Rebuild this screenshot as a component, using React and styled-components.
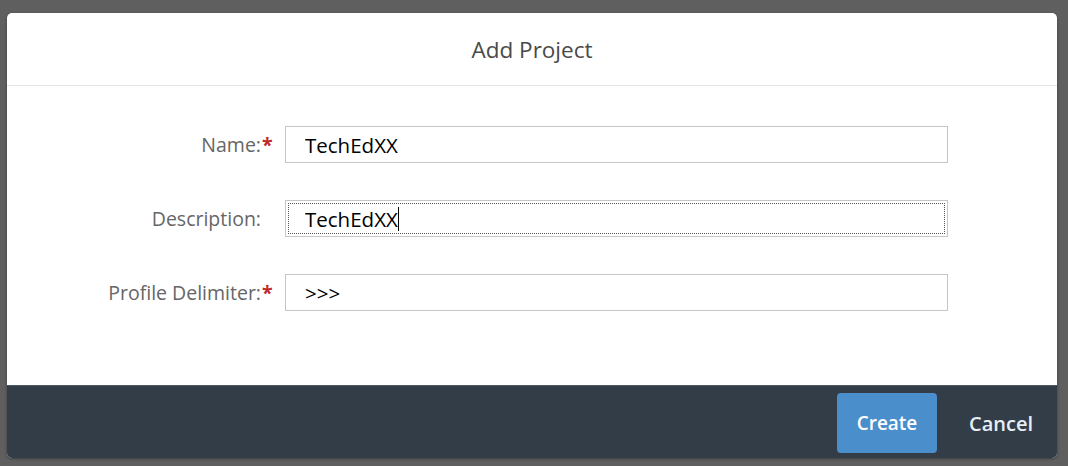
import React from 'react';
import styled, { createGlobalStyle } from 'styled-components';

const GlobalStyle = createGlobalStyle`
  html, body {
    margin: 0;
    padding: 0;
    background: #5f5f5f;
    font-family: "Open Sans", "Liberation Sans", sans-serif;
  }
`;

const Backdrop = styled.div`
  width: 1068px;
  height: 466px;
  box-sizing: border-box;
  padding: 13px 11px 8px 7px;
  display: flex;
`;

const Dialog = styled.div`
  flex: 1;
  display: flex;
  flex-direction: column;
  background: #ffffff;
  border-radius: 5px;
  overflow: hidden;
  box-shadow: 0 1px 3px rgba(0, 0, 0, 0.35);
`;

const Header = styled.div`
  height: 72px;
  display: flex;
  align-items: center;
  justify-content: center;
  border-bottom: 1px solid #e5e5e5;
  font-size: 22.5px;
  color: #4a4a4a;
`;

const Content = styled.div`
  flex: 1;
  display: flex;
  flex-direction: column;
  gap: 37px;
  padding: 40px 0 0;
`;

const Row = styled.div`
  display: grid;
  grid-template-columns: 266px 663px;
  column-gap: 12px;
  align-items: center;
`;

const Label = styled.label`
  justify-self: end;
  display: flex;
  align-items: center;
  font-size: 19.5px;
  color: #666666;
`;

const Star = styled.span`
  display: inline-block;
  width: 11px;
  margin-left: 1px;
  color: #c0282b;
  font-weight: 700;
  visibility: ${(p) => (p.$hidden ? 'hidden' : 'visible')};
`;

const Field = styled.div`
  position: relative;
  height: 37px;
  box-sizing: border-box;
  border: 1px solid #c5c5c5;
  background: #fff;
  display: flex;
  align-items: center;
  padding-left: 19px;
  font-size: 20.5px;
  color: #000;

  ${(p) =>
    p.$focused &&
    `
    &::after {
      content: '';
      position: absolute;
      inset: 2px;
      border: 1px dotted #555;
    }
  `}
`;

const Caret = styled.span`
  display: inline-block;
  width: 1px;
  height: 24px;
  background: #000;
`;

const Footer = styled.div`
  height: 72px;
  background: #333d48;
  border-top: 1px solid #4a5866;
  display: flex;
  align-items: center;
  justify-content: flex-end;
  padding-right: 22px;
  gap: 30px;
`;

const Button = styled.button`
  height: 60px;
  padding: 0 ${(p) => (p.$primary ? '0' : '2px')};
  width: ${(p) => (p.$primary ? '100px' : 'auto')};
  margin-top: 2px;
  border: none;
  border-radius: 4px;
  background: ${(p) => (p.$primary ? '#4a8fcc' : 'transparent')};
  color: ${(p) => (p.$primary ? '#ffffff' : '#e6eef6')};
  font-family: "Open Sans", "Liberation Sans", sans-serif;
  font-size: ${(p) => (p.$primary ? '19px' : '20px')};
  font-weight: 600;
  cursor: pointer;
`;

const fields = [
  { label: 'Name:', value: 'TechEdXX', required: true },
  { label: 'Description:', value: 'TechEdXX', focused: true },
  { label: 'Profile Delimiter:', value: '>>>', required: true },
];

export default function App() {
  return (
    <>
      <GlobalStyle />
      <Backdrop>
        <Dialog>
          <Header>Add Project</Header>
          <Content>
            {fields.map((f) => (
              <Row key={f.label}>
                <Label>
                  {f.label}
                  <Star $hidden={!f.required}>*</Star>
                </Label>
                <Field $focused={f.focused}>
                  {f.value}
                  {f.focused && <Caret />}
                </Field>
              </Row>
            ))}
          </Content>
          <Footer>
            <Button $primary>Create</Button>
            <Button>Cancel</Button>
          </Footer>
        </Dialog>
      </Backdrop>
    </>
  );
}
